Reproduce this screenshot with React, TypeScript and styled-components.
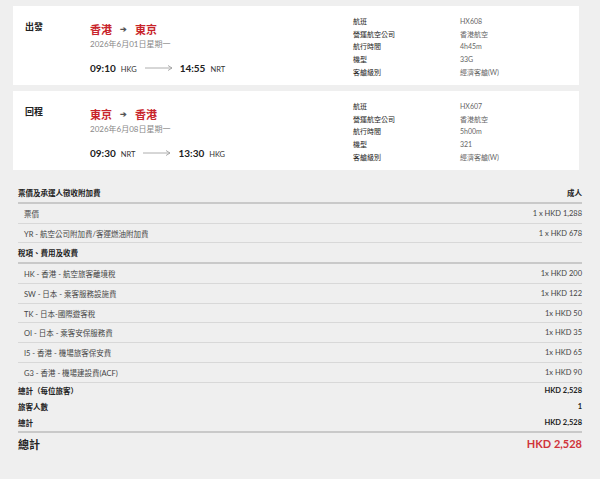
import React from 'react';
import styled, { createGlobalStyle } from 'styled-components';

const Global = createGlobalStyle`
  body { margin: 0; background: #efefef; font-family: Lato, 'Noto Sans CJK TC', sans-serif; color: #222; }
`;

const Page = styled.div`
  padding: 6px 21px 0 13px;
  display: flex;
  flex-direction: column;
  gap: 6px;
`;

const Card = styled.div`
  background: #fff;
  height: 79px;
  display: grid;
  grid-template-columns: 65px 263px 107px 1fr;
  padding: 13px 12px 0;
  box-sizing: border-box;
`;

const Label = styled.div`
  font-size: 9px;
  font-weight: 700;
  margin-top: 1px;
`;

const Route = styled.div`
  display: flex;
  align-items: center;
  gap: 8px;
  color: #c8242b;
  font-size: 11px;
  font-weight: 700;
  margin-top: 2px;
  span.arrow { color: #555; font-size: 8px; }
`;

const DateText = styled.div`
  color: #888;
  font-size: 8px;
  margin-top: 1px;
`;

const Times = styled.div`
  display: flex;
  align-items: baseline;
  margin-top: 13px;
  font-size: 10px;
  font-weight: 700;
  small { font-size: 7.5px; font-weight: 400; margin-left: 5px; color: #333; }
`;

const Line = styled.svg`
  margin: 0 7px 0 8px;
  align-self: center;
`;

const Info = styled.div`
  display: flex;
  flex-direction: column;
  font-size: 7px;
  line-height: 12.7px;
  margin-top: -4px;
  color: ${(p: { $muted?: boolean }) => (p.$muted ? '#666' : '#222')};
`;

const Table = styled.div`
  margin: 13px 18px 0 18px;
  display: flex;
  flex-direction: column;
  font-size: 7.5px;
`;

const HeadRow = styled.div`
  display: flex;
  justify-content: space-between;
  align-items: center;
  height: 19px;
  font-weight: 700;
  border-bottom: 2px solid #c9c9c9;
`;

const Row = styled.div`
  display: flex;
  justify-content: space-between;
  align-items: center;
  height: 18.7px;
  padding-left: ${(p: { $indent?: boolean }) => (p.$indent ? '6px' : '0')};
  color: #444;
  border-bottom: 1px solid #d8d8d8;
`;

const SumRow = styled.div<{ $rule?: boolean }>`
  display: flex;
  justify-content: space-between;
  align-items: center;
  height: 16px;
  font-weight: 700;
  border-bottom: ${(p) => (p.$rule ? '2px solid #c9c9c9' : 'none')};
`;

const Total = styled.div`
  display: flex;
  justify-content: space-between;
  align-items: center;
  height: 22px;
  font-size: 11px;
  font-weight: 700;
  span:last-child { color: #d0343a; }
`;

const flights = [
  { label: '出發', from: '香港', to: '東京', date: '2026年6月01日星期一', dt: '09:10', da: 'HKG', at: '14:55', aa: 'NRT', info: ['HX608', '香港航空', '4h45m', '33G', '經濟客艙(W)'] },
  { label: '回程', from: '東京', to: '香港', date: '2026年6月08日星期一', dt: '09:30', da: 'NRT', at: '13:30', aa: 'HKG', info: ['HX607', '香港航空', '5h00m', '321', '經濟客艙(W)'] },
];
const keys = ['航班', '營運航空公司', '航行時間', '機型', '客艙級別'];

const taxes = [
  ['HK - 香港 - 航空旅客離境稅', '1x HKD 200'],
  ['SW - 日本 - 乘客服務設施費', '1x HKD 122'],
  ['TK - 日本-國際遊客稅', '1x HKD 50'],
  ['OI - 日本 - 乘客安保服務費', '1x HKD 35'],
  ['I5 - 香港 - 機場旅客保安費', '1x HKD 65'],
  ['G3 - 香港 - 機場建設費(ACF)', '1x HKD 90'],
];

export default function App() {
  return (
    <>
      <Global />
      <Page>
        {flights.map((f) => (
          <Card key={f.label}>
            <Label>{f.label}</Label>
            <div>
              <Route>{f.from}<span className="arrow">➔</span>{f.to}</Route>
              <DateText>{f.date}</DateText>
              <Times>
                {f.dt}<small>{f.da}</small>
                <Line width="28" height="6" viewBox="0 0 28 6">
                  <path d="M0 3H27M23 0.5L27 3L23 5.5" stroke="#999" strokeWidth="0.8" fill="none" />
                </Line>
                {f.at}<small>{f.aa}</small>
              </Times>
            </div>
            <Info>{keys.map((k) => <span key={k}>{k}</span>)}</Info>
            <Info $muted>{f.info.map((v, i) => <span key={i}>{v}</span>)}</Info>
          </Card>
        ))}
      </Page>
      <Table>
        <HeadRow><span>票價及承運人徵收附加費</span><span>成人</span></HeadRow>
        <Row $indent><span>票價</span><span>1 x HKD 1,288</span></Row>
        <Row $indent><span>YR - 航空公司附加費/客運燃油附加費</span><span>1 x HKD 678</span></Row>
        <HeadRow><span>稅項、費用及收費</span><span /></HeadRow>
        {taxes.map(([a, b]) => (
          <Row $indent key={a}><span>{a}</span><span>{b}</span></Row>
        ))}
        <SumRow><span>總計（每位旅客）</span><span>HKD 2,528</span></SumRow>
        <SumRow><span>旅客人數</span><span>1</span></SumRow>
        <SumRow $rule><span>總計</span><span>HKD 2,528</span></SumRow>
        <Total><span>總計</span><span>HKD 2,528</span></Total>
      </Table>
    </>
  );
}
